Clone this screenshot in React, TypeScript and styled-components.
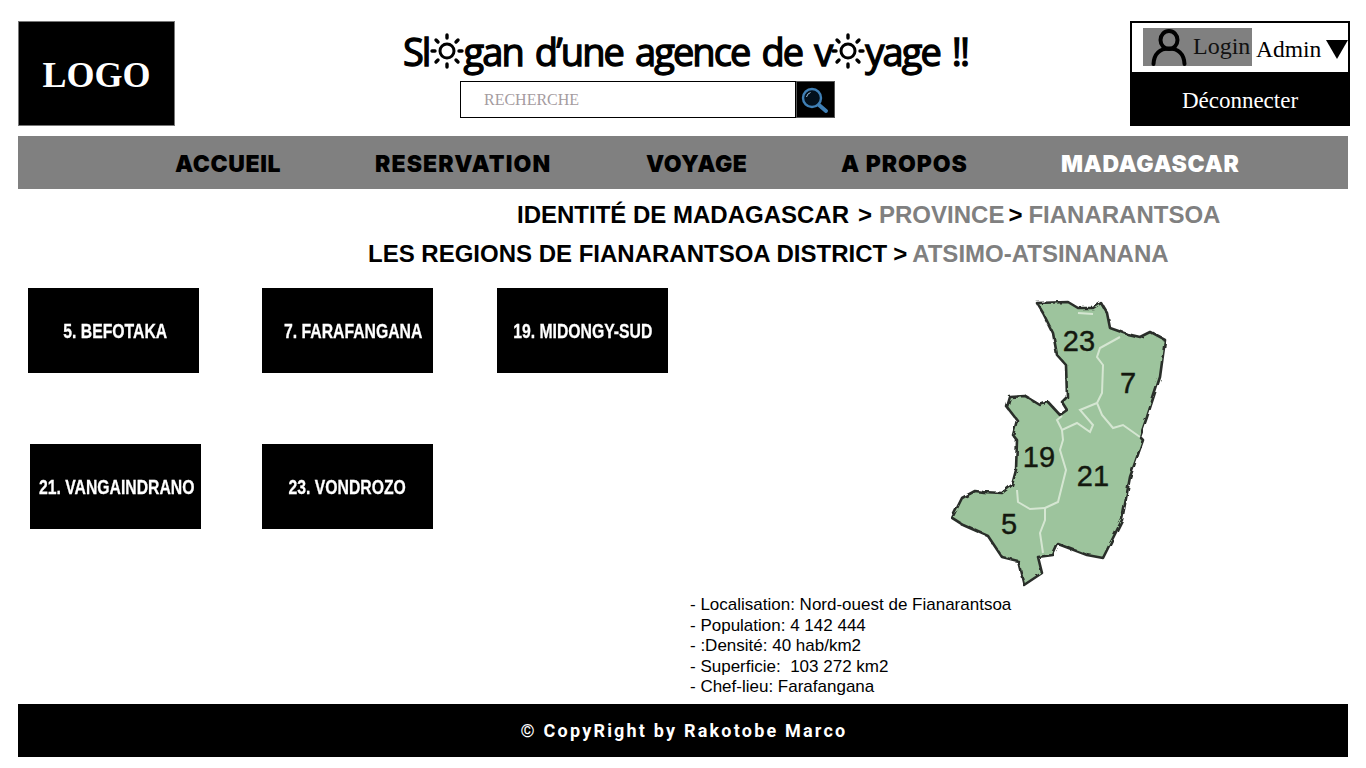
import React from 'react'
import styled, { createGlobalStyle } from 'styled-components'

const GlobalStyle = createGlobalStyle`
  html, body {
    margin: 0;
    padding: 0;
    background: #fff;
    overflow: hidden;
  }
  * {
    box-sizing: border-box;
  }
`

const Page = styled.div`
  width: 1366px;
  height: 768px;
  padding: 21px 18px 0;
  display: flex;
  flex-direction: column;
  font-family: 'Liberation Sans', Arial, sans-serif;
  color: #000;
`

const Header = styled.header`
  display: flex;
  justify-content: space-between;
  height: 105px;
`

const Logo = styled.div`
  width: 157px;
  height: 105px;
  background: #000;
  border: 1px solid #777;
  color: #fff;
  font: bold 36px 'Liberation Serif', serif;
  display: flex;
  align-items: center;
  justify-content: center;
  padding-top: 2px;
`

const Center = styled.div`
  display: flex;
  flex-direction: column;
  align-items: center;
  padding-left: 2px;
`

const Slogan = styled.h1`
  margin: 4px 0 4px 64px;
  height: 52px;
  display: flex;
  align-items: center;
  font: 500 38px 'Open Sans', sans-serif;
  letter-spacing: -1.9px;
  word-spacing: 4px;
  white-space: pre;
  -webkit-text-stroke: 1.3px #000;

  svg {
    margin: 0 -1px;
    flex: none;
  }
`

const SearchForm = styled.form`
  display: flex;
  margin-left: -12px;
`

const SearchInput = styled.div`
  width: 336px;
  height: 37px;
  border: 1px solid #000;
  padding-left: 23px;
  display: flex;
  align-items: center;
  font: 16px 'Liberation Serif', serif;
  color: #a59c9f;
`

const SearchButton = styled.button`
  width: 39px;
  height: 37px;
  padding: 0;
  background: #000;
  border: 1px solid #555;
  display: flex;
  align-items: center;
  justify-content: center;
`

const UserBox = styled.div`
  width: 220px;
  height: 105px;
  margin-right: -2px;
  border: 2px solid #000;
  display: flex;
  flex-direction: column;
  font-family: 'Liberation Serif', serif;
`

const UserRow = styled.div`
  height: 49px;
  display: flex;
  align-items: flex-start;
  padding: 5px 0 0 11px;
`

const LoginChip = styled.div`
  flex: none;
  width: 109px;
  height: 38px;
  background: #808080;
  display: flex;
  font-size: 24px;
  padding-left: 8px;
  gap: 6px;
  line-height: 36px;
  color: #111;
`

const AdminLabel = styled.span`
  flex: none;
  font-size: 23.5px;
  margin-left: 4px;
  line-height: 42px;
`

const Caret = styled.span`
  flex: none;
  width: 0;
  height: 0;
  margin: 12px 0 0 5px;
  border-left: 11px solid transparent;
  border-right: 11px solid transparent;
  border-top: 19px solid #000;
`

const Logout = styled.div`
  flex: 1;
  background: #000;
  color: #fff;
  font-size: 23px;
  padding-top: 6px;
  display: flex;
  align-items: center;
  justify-content: center;
`

const Nav = styled.nav`
  height: 53px;
  margin-top: 10px;
  background: #808080;
  display: flex;
  align-items: center;
  padding: 3px 0 0 157px;
`

const NavItem = styled.a<{ $active?: boolean; $width: number; $track: number }>`
  width: ${p => p.$width}px;
  flex: none;
  font: 900 23px 'Inter', sans-serif;
  letter-spacing: ${p => p.$track}px;
  color: ${p => (p.$active ? '#fff' : '#000')};
`

const Crumbs = styled.div`
  display: flex;
  flex-direction: column;
  height: 99px;
  padding-top: 12px;
  font-weight: bold;
  font-size: 24px;
  line-height: 27px;
`

const CrumbLine = styled.div<{ $left: number }>`
  padding-left: ${p => p.$left}px;
  margin-bottom: 12px;
  white-space: pre;
`

const Muted = styled.span`
  color: #808080;
`

const Sep = styled.span<{ $before: number; $after: number }>`
  margin: 0 ${p => p.$after}px 0 ${p => p.$before}px;
`

const Main = styled.main`
  flex: 1;
  display: flex;
`

const Regions = styled.div`
  width: 672px;
  display: flex;
  flex-direction: column;
  gap: 71px;
`

const RegionRow = styled.div<{ $indent: number; $gap: number }>`
  display: flex;
  padding-left: ${p => p.$indent}px;
  gap: ${p => p.$gap}px;
`

const RegionButton = styled.a<{ $offset?: number }>`
  flex: none;
  width: 171px;
  height: 85px;
  padding: 1px 0 0 ${p => p.$offset ?? 0}px;
  background: #000;
  color: #fff;
  display: flex;
  align-items: center;
  justify-content: center;
`

const RegionLabel = styled.span`
  font: bold 21px 'Liberation Sans', sans-serif;
  white-space: nowrap;
  transform: scaleX(0.75);
  -webkit-text-stroke: 0.3px #fff;
`

const Details = styled.div`
  flex: 1;
  display: flex;
  flex-direction: column;
`

const MapImage = styled.svg`
  display: block;
  margin: 12px 0 0 261px;
`

const Facts = styled.div`
  margin-top: 7px;
  font-size: 17px;
  line-height: 20.5px;
  white-space: pre;
`

const Footer = styled.footer`
  height: 53px;
  margin-bottom: 11px;
  padding-left: 2px;
  background: #000;
  color: #fff;
  font: bold 18px 'Roboto', sans-serif;
  letter-spacing: 2.2px;
  display: flex;
  align-items: center;
  justify-content: center;
`

const Sun = () => (
  <svg width="36" height="36" viewBox="0 0 36 36" aria-hidden="true">
    <circle cx="18" cy="18" r="7" fill="none" stroke="#000" strokeWidth="3" />
    <g stroke="#000" strokeWidth="3.4" strokeLinecap="round">
      <path d="M18 2v3M18 31v3M3 18h3M30 18h3M7 7l2 2M27 27l2 2M29 7l-2 2M9 27l-2 2" />
    </g>
  </svg>
)

const SearchIcon = () => (
  <svg width="30" height="30" viewBox="0 0 30 30" aria-hidden="true">
    <circle cx="12" cy="13" r="9" fill="#03101c" stroke="#3f7fb5" strokeWidth="2.4" />
    <path d="M6.5 12a6 6 0 0 1 4-4.5" fill="none" stroke="#9fc2de" strokeWidth="1" />
    <path d="M19 20l7 6" stroke="#3f7fb5" strokeWidth="4" strokeLinecap="round" />
  </svg>
)

const UserIcon = () => (
  <svg width="36" height="38" viewBox="0 0 36 38" aria-hidden="true">
    <g fill="none" stroke="#000" strokeWidth="4" strokeLinecap="round">
      <ellipse cx="18" cy="12" rx="8.5" ry="9" />
      <path d="M2.5 36C3 26 9 20.5 18 20.5S33 26 33.5 36" />
    </g>
  </svg>
)

const outline =
  '86,3 117,2 127,8 142,8 150,3 156,13 159,28 176,34 189,37 199,32 214,40 209,77 196,117 189,137 192,140 179,177 171,220 152,258 136,255 107,244 102,255 87,257 91,273 73,285 70,273 67,261 51,257 37,236 12,225 1,218 11,198 24,191 32,192 51,193 61,185 65,170 66,140 62,135 66,120 56,107 59,97 74,96 89,105 97,102 109,115 116,110 111,102 116,97 115,65 106,55 102,33 92,13'

const inner = [
  '169,37 149,48 146,57 152,65 151,93 146,103 151,115 162,128 172,125 189,137',
  '146,103 129,110 142,125 139,132 126,123 111,130 106,120 111,116',
  '111,130 112,140 109,150 115,170 107,202 94,208 94,220 89,233 92,253',
  '94,208 79,209 67,202 66,190',
  '127,13 142,14',
]

const labels = [
  { n: '23', x: 128, y: 51 },
  { n: '7', x: 177, y: 93 },
  { n: '19', x: 88, y: 167 },
  { n: '21', x: 142, y: 186 },
  { n: '5', x: 58, y: 234 },
]

// map of the Atsimo-Atsinanana region, traced by hand
const RegionMap = () => (
  <MapImage width="218" height="288" viewBox="0 0 218 288" role="img" aria-label="Carte">
    <defs>
      <filter id="coast" x="-5%" y="-5%" width="110%" height="110%">
        <feTurbulence type="fractalNoise" baseFrequency="0.12" numOctaves="2" seed="4" />
        <feDisplacementMap in="SourceGraphic" scale="4" />
        <feGaussianBlur stdDeviation="0.4" />
      </filter>
    </defs>
    <polygon
      points={outline}
      fill="#9dc49d"
      stroke="#2a2f2a"
      strokeWidth="2.6"
      strokeLinejoin="round"
      filter="url(#coast)"
    />
    {inner.map(points => (
      <polyline key={points} points={points} fill="none" stroke="#d5e6d2" strokeWidth="2" />
    ))}
    {labels.map(l => (
      <text
        key={l.n}
        x={l.x}
        y={l.y}
        textAnchor="middle"
        fontFamily="Liberation Sans, sans-serif"
        fontSize="29"
        fill="#14180f"
        stroke="#14180f"
        strokeWidth="0.4"
      >
        {l.n}
      </text>
    ))}
  </MapImage>
)

const App = () => (
  <Page>
    <GlobalStyle />
    <Header>
      <Logo>LOGO</Logo>
      <Center>
        <Slogan>
          Sl
          <Sun />
          gan d’une agence de v
          <Sun />
          yage !!
        </Slogan>
        <SearchForm>
          <SearchInput>RECHERCHE</SearchInput>
          <SearchButton type="button" aria-label="Rechercher">
            <SearchIcon />
          </SearchButton>
        </SearchForm>
      </Center>
      <UserBox>
        <UserRow>
          <LoginChip>
            <UserIcon />
            Login
          </LoginChip>
          <AdminLabel>Admin</AdminLabel>
          <Caret />
        </UserRow>
        <Logout>Déconnecter</Logout>
      </UserBox>
    </Header>

    <Nav>
      <NavItem $width={200} $track={0.6}>ACCUEIL</NavItem>
      <NavItem $width={271} $track={1.1}>RESERVATION</NavItem>
      <NavItem $width={195} $track={0.5}>VOYAGE</NavItem>
      <NavItem $width={220} $track={0.9}>A PROPOS</NavItem>
      <NavItem $width={200} $track={0.6} $active>
        MADAGASCAR
      </NavItem>
    </Nav>

    <Crumbs>
      <CrumbLine $left={499}>
        IDENTITÉ DE MADAGASCAR<Sep $before={9} $after={7}>&gt;</Sep>
        <Muted>PROVINCE</Muted>
        <Sep $before={4} $after={6}>&gt;</Sep>
        <Muted>FIANARANTSOA</Muted>
      </CrumbLine>
      <CrumbLine $left={350}>
        LES REGIONS DE FIANARANTSOA DISTRICT<Sep $before={6} $after={5}>&gt;</Sep>
        <Muted>ATSIMO-ATSINANANA</Muted>
      </CrumbLine>
    </Crumbs>

    <Main>
      <Regions>
        <RegionRow $indent={10} $gap={63.4}>
          <RegionButton $offset={3}><RegionLabel>5. BEFOTAKA</RegionLabel></RegionButton>
          <RegionButton $offset={10}><RegionLabel>7. FARAFANGANA</RegionLabel></RegionButton>
          <RegionButton><RegionLabel>19. MIDONGY-SUD</RegionLabel></RegionButton>
        </RegionRow>
        <RegionRow $indent={12} $gap={61}>
          <RegionButton $offset={3}><RegionLabel>21. VANGAINDRANO</RegionLabel></RegionButton>
          <RegionButton><RegionLabel>23. VONDROZO</RegionLabel></RegionButton>
        </RegionRow>
      </Regions>
      <Details>
        <RegionMap />
        <Facts>
          - Localisation: Nord-ouest de Fianarantsoa{'\n'}
          - Population: 4 142 444{'\n'}
          - :Densité: 40 hab/km2{'\n'}
          - Superficie:  103 272 km2{'\n'}
          - Chef-lieu: Farafangana
        </Facts>
      </Details>
    </Main>

    <Footer>© CopyRight by Rakotobe Marco</Footer>
  </Page>
)

export default App
